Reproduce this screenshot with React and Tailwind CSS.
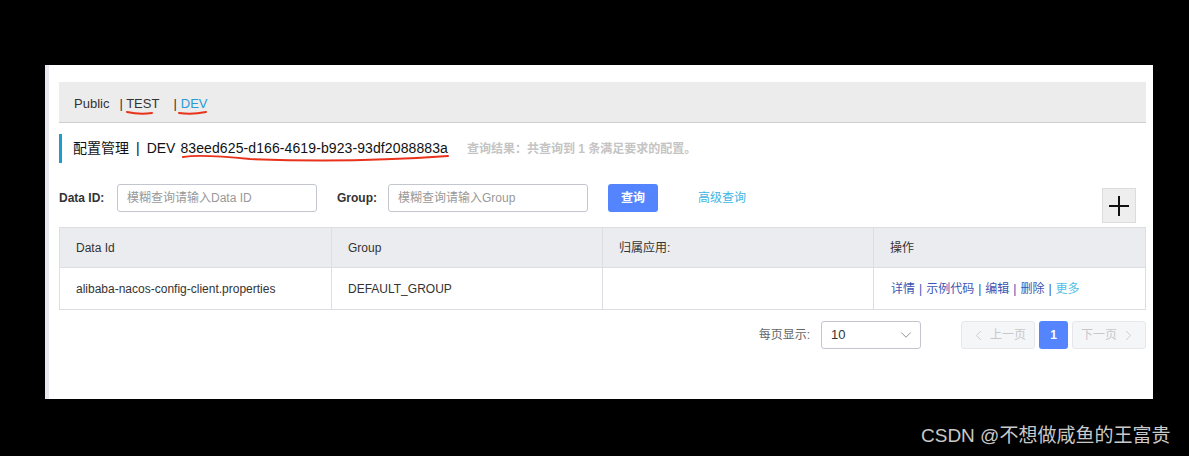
import React from 'react';
import { ChevronDown, ChevronLeft, ChevronRight } from 'lucide-react';

const font = { fontFamily: '"Liberation Sans", "Noto Sans CJK SC", sans-serif' };

const cols = ['w-[272px]', 'w-[271px]', 'w-[271px]', 'flex-1'];

const Tabs = () => (
  <div className="mt-[17px] h-[41px] bg-[#ececec] border-b border-[#cfcfcf] flex items-center pl-[15px] pt-[3px] text-[13px] text-[#333]">
    <span>Public</span>
    <span className="ml-[10px]">| TEST</span>
    <span className="ml-[14px]">|</span>
    <span className="ml-[4px] text-[#2b9ad6]">DEV</span>
  </div>
);

const Title = () => (
  <div className="mt-[11px] h-[29px] border-l-[3px] border-[#209bce] pl-[11px] flex items-center text-[14px] text-[#111]">
    <span>配置管理</span>
    <span className="mx-[7px]">|</span>
    <span>DEV</span>
    <span className="ml-[5px] tracking-[0.1px]">83eed625-d166-4619-b923-93df2088883a</span>
    <span className="ml-[19px] text-[12px] font-bold text-[#c4c4c4]">查询结果：共查询到 1 条满足要求的配置。</span>
  </div>
);

const SearchRow = () => (
  <div className="mt-[21px] flex items-start text-[12px]">
    <div className="h-[28px] flex items-center font-bold text-[#333] w-[58px]">Data ID:</div>
    <div className="w-[200px] h-[28px] border border-[#c4c6cf] rounded-[3px] flex items-center pl-[9px] text-[#999]">
      模糊查询请输入Data ID
    </div>
    <div className="ml-[20px] h-[28px] flex items-center font-bold text-[#333] w-[51px]">Group:</div>
    <div className="w-[200px] h-[28px] border border-[#c4c6cf] rounded-[3px] flex items-center pl-[9px] text-[#999]">
      模糊查询请输入Group
    </div>
    <button className="ml-[20px] w-[50px] h-[28px] rounded-[3px] bg-[#5584ff] text-white font-bold">查询</button>
    <span className="ml-[40px] h-[28px] flex items-center text-[#3cb5e2]">高级查询</span>
    <button className="ml-auto mr-[10px] mt-[4px] w-[34px] h-[35px] bg-[#eeeeee] border border-[#dcdcdc] flex items-center justify-center">
      <svg width="22" height="22" viewBox="0 0 22 22">
        <path d="M11 1v20M1 11h20" stroke="#111" strokeWidth="2" />
      </svg>
    </button>
  </div>
);

const Table = () => {
  const head = ['Data Id', 'Group', '归属应用:', '操作'];
  return (
    <div className="mt-[4px] border border-[#dcdee3] text-[12px] text-[#333]">
      <div className="flex h-[40px] bg-[#ebecf0] border-b border-[#dcdee3]">
        {head.map((h, i) => (
          <div key={h} className={`${cols[i]} ${i < 3 ? 'border-r border-[#dcdee3]' : ''} flex items-center pl-[16px]`}>
            {h}
          </div>
        ))}
      </div>
      <div className="flex h-[41px]">
        <div className="w-[272px] border-r border-[#dcdee3] flex items-center pl-[16px]">alibaba-nacos-config-client.properties</div>
        <div className="w-[271px] border-r border-[#dcdee3] flex items-center pl-[16px]">DEFAULT_GROUP</div>
        <div className="w-[271px] border-r border-[#dcdee3]"></div>
        <div className="flex-1 flex items-center pl-[17px] text-[#3a55b4]">
          <span>详情</span>
          <span className="mx-[4px]">|</span>
          <span>示例代码</span>
          <span className="mx-[4px]">|</span>
          <span>编辑</span>
          <span className="mx-[4px]">|</span>
          <span>删除</span>
          <span className="mx-[4px]">|</span>
          <span className="text-[#4fc0e8]">更多</span>
        </div>
      </div>
    </div>
  );
};

const Pager = () => (
  <div className="mt-[11px] flex items-center justify-end text-[12px]">
    <span className="text-[#666]">每页显示:</span>
    <div className="ml-[11px] w-[100px] h-[28px] border border-[#c4c6cf] rounded-[3px] flex items-center pl-[9px] pr-[5px] text-[#333]">
      <span className="text-[13px]">10</span>
      <ChevronDown className="ml-auto text-[#888]" size={18} strokeWidth={1.2} />
    </div>
    <div className="ml-[40px] w-[74px] h-[28px] border border-[#e6e7eb] bg-[#f5f6f8] rounded-[3px] flex items-center justify-center gap-[3px] text-[#c6c8ce]">
      <ChevronLeft size={17} strokeWidth={1.3} />
      <span>上一页</span>
    </div>
    <div className="ml-[4px] w-[29px] h-[28px] bg-[#5584ff] rounded-[3px] flex items-center justify-center text-white font-bold">1</div>
    <div className="ml-[4px] w-[74px] h-[28px] border border-[#e6e7eb] bg-[#f5f6f8] rounded-[3px] flex items-center justify-center gap-[3px] text-[#c6c8ce]">
      <span>下一页</span>
      <ChevronRight size={17} strokeWidth={1.3} />
    </div>
  </div>
);

const App = () => {
  return (
    <div className="relative w-[1189px] h-[456px] bg-black overflow-hidden pt-[65px] pl-[45px]" style={font}>
      <div className="w-[1108px] h-[334px] bg-white flex">
        <div className="w-[4px] bg-[#e7e9ee]"></div>
        <div className="flex-1 pl-[10px] pr-[7px] flex flex-col">
          <Tabs />
          <Title />
          <SearchRow />
          <Table />
          <Pager />
        </div>
      </div>

      {/* hand-drawn red marks */}
      <svg className="absolute left-0 top-0 pointer-events-none" width="1189" height="456">
        <path d="M127 112 Q140 115 152 113" stroke="#e8321b" strokeWidth="2" fill="none" strokeLinecap="round" />
        <path d="M179 113 Q192 115 206 112" stroke="#e8321b" strokeWidth="2" fill="none" strokeLinecap="round" />
        <path d="M183 157 Q200 154 250 159 Q350 163 448 156" stroke="#e8321b" strokeWidth="2" fill="none" strokeLinecap="round" />
      </svg>

      <div className="absolute left-[921px] top-[423px] text-[19px] text-[#c9c9c9] leading-[26px]">
        CSDN @不想做咸鱼的王富贵
      </div>
    </div>
  );
};

export default App;
